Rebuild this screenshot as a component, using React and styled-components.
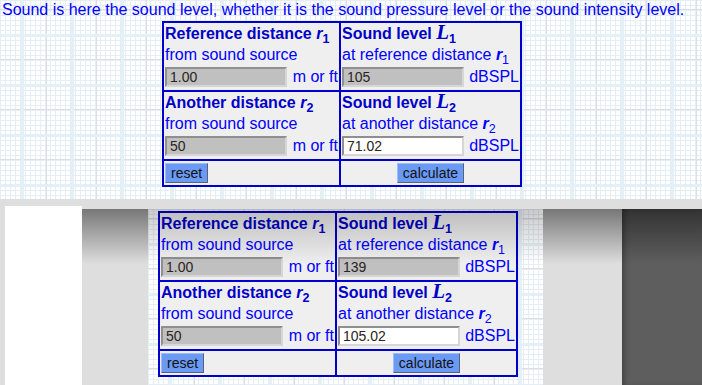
import React from "react";
import styled, { createGlobalStyle, css } from "styled-components";

const GlobalStyle = createGlobalStyle`
  html, body {
    margin: 0;
    padding: 0;
  }
  body {
    width: 702px;
    height: 385px;
    overflow: hidden;
    font-family: "Liberation Sans", Arial, sans-serif;
    background: #fff;
  }
`;

/* graph paper behind the calculator */
const paper = css`
  background-color: #fff;
  background-image:
    linear-gradient(90deg, #e4f0f8 3px, transparent 3px),
    linear-gradient(#e4f0f8 3px, transparent 3px),
    linear-gradient(90deg, #dcdde5 1px, transparent 1px),
    linear-gradient(#dcdde5 1px, transparent 1px),
    linear-gradient(90deg, #e6eef5 1px, transparent 1px),
    linear-gradient(#e6eef5 1px, transparent 1px);
  background-size: 50px 50px, 50px 50px, 50px 50px, 50px 50px, 5px 5px, 5px 5px;
  background-position: 21px 0, 0 34px, 46px 0, 0 9px, 0 0, 0 0;
`;

const Page = styled.div`
  width: 702px;
  height: 385px;
  display: flex;
  flex-direction: column;
`;

const TopArea = styled.div`
  ${paper};
  height: 199px;
`;

const Title = styled.div`
  height: 20px;
  line-height: 20px;
  padding-left: 2px;
  font-size: 16px;
  color: #0000ff;
  white-space: nowrap;
`;

const Band = styled.div`
  height: 10px;
  background: #dedede;
`;

const LowerRow = styled.div`
  flex: 1;
  display: flex;
`;

const EdgeGray = styled.div`
  width: 5px;
  background: #dedede;
`;

const WhitePanel = styled.div`
  width: 77px;
  margin-top: -3px;
  background: #fff;
`;

const ShadedGray = styled.div`
  width: ${p => p.$w}px;
  background: linear-gradient(#777 0, #dedede 55px);
`;

const PaperColumn = styled.div`
  ${paper};
  position: relative;
  width: 385px;
  padding: 2px 0 0 10px;
  &::after {
    content: "";
    position: absolute;
    left: 0;
    right: 0;
    top: 0;
    height: 55px;
    background: linear-gradient(rgba(0, 0, 0, 0.21), rgba(0, 0, 0, 0));
    pointer-events: none;
  }
`;

const DarkPanel = styled.div`
  flex: 1;
  background: linear-gradient(#333 0, #5e5e5e 55px);
  box-shadow: inset 5px 0 6px -3px rgba(0, 0, 0, 0.35);
`;

/* calculator table */
const Table = styled.div`
  display: grid;
  grid-template-columns: 175px 179px;
  grid-template-rows: 67px 67px 24px;
  gap: 2px;
  padding: 2px;
  width: 360px;
  box-sizing: border-box;
  background: #0000cc;
  margin-left: ${p => p.$left || 0}px;
  margin-top: ${p => p.$top || 0}px;
`;

const Cell = styled.div`
  background: #efefef;
  padding: 0 1px;
  display: flex;
  flex-direction: column;
  color: #0000ff;
  font-size: 16px;
`;

const ButtonCell = styled(Cell)`
  padding-top: 2px;
  align-items: ${p => (p.$center ? "center" : "flex-start")};
`;

const Heading = styled.div`
  height: 21px;
  line-height: 21px;
  font-weight: bold;
  color: #0000c8;
  white-space: nowrap;
`;

const Line = styled.div`
  height: 21px;
  line-height: 21px;
  white-space: nowrap;
`;

const Var = styled.i`
  font-weight: bold;
  font-style: italic;
`;

const SerifVar = styled.i`
  font-family: "Liberation Serif", "Times New Roman", serif;
  font-size: 21px;
  font-weight: bold;
  font-style: italic;
  line-height: 0;
`;

const Sub = styled.span`
  font-size: 12.5px;
  vertical-align: -4px;
  line-height: 0;
`;

const FieldRow = styled.div`
  height: 24px;
  display: flex;
  align-items: center;
  justify-content: space-between;
`;

const Field = styled.input`
  width: 122px;
  height: 20px;
  box-sizing: border-box;
  padding: 0 3px;
  border: 2px solid;
  border-color: #8f8f8f #d6d6d6 #d6d6d6 #8f8f8f;
  background: ${p => (p.$result ? "#fff" : "#c0c0c0")};
  font-family: "Liberation Sans", Arial, sans-serif;
  font-size: 14px;
  color: #2a2420;
  outline: none;
`;

const Unit = styled.span`
  line-height: 20px;
  white-space: nowrap;
`;

const Button = styled.button`
  height: 20px;
  padding: 0 5px;
  border: 1px solid;
  border-color: #9ebcf6 #58627a #58627a #9ebcf6;
  background: #6b9af5;
  font-family: "Liberation Sans", Arial, sans-serif;
  font-size: 14px;
  color: #111;
  line-height: 18px;
  cursor: pointer;
`;

function Calculator({ r1, L1, r2, L2, left, top }) {
  return (
    <Table $left={left} $top={top}>
      <Cell>
        <Heading>
          Reference distance <Var>r</Var>
          <Sub>1</Sub>
        </Heading>
        <Line>from sound source</Line>
        <FieldRow>
          <Field value={r1} readOnly />
          <Unit>m or ft</Unit>
        </FieldRow>
      </Cell>
      <Cell>
        <Heading>
          Sound level <SerifVar>L</SerifVar>
          <Sub>1</Sub>
        </Heading>
        <Line>
          at reference distance <Var>r</Var>
          <Sub>1</Sub>
        </Line>
        <FieldRow>
          <Field value={L1} readOnly />
          <Unit>dBSPL</Unit>
        </FieldRow>
      </Cell>
      <Cell>
        <Heading>
          Another distance <Var>r</Var>
          <Sub>2</Sub>
        </Heading>
        <Line>from sound source</Line>
        <FieldRow>
          <Field value={r2} readOnly />
          <Unit>m or ft</Unit>
        </FieldRow>
      </Cell>
      <Cell>
        <Heading>
          Sound level <SerifVar>L</SerifVar>
          <Sub>2</Sub>
        </Heading>
        <Line>
          at another distance <Var>r</Var>
          <Sub>2</Sub>
        </Line>
        <FieldRow>
          <Field $result value={L2} readOnly />
          <Unit>dBSPL</Unit>
        </FieldRow>
      </Cell>
      <ButtonCell>
        <Button>reset</Button>
      </ButtonCell>
      <ButtonCell $center>
        <Button>calculate</Button>
      </ButtonCell>
    </Table>
  );
}

export default function App() {
  return (
    <>
      <GlobalStyle />
      <Page>
        <TopArea>
          <Title>
            Sound is here the sound level, whether it is the sound pressure level or the sound intensity level.
          </Title>
          <Calculator r1="1.00" L1="105" r2="50" L2="71.02" left={162} top={1} />
        </TopArea>
        <Band />
        <LowerRow>
          <EdgeGray />
          <WhitePanel />
          <ShadedGray $w={66} />
          <PaperColumn>
            <Calculator r1="1.00" L1="139" r2="50" L2="105.02" />
          </PaperColumn>
          <ShadedGray $w={79} />
          <DarkPanel />
        </LowerRow>
      </Page>
    </>
  );
}
